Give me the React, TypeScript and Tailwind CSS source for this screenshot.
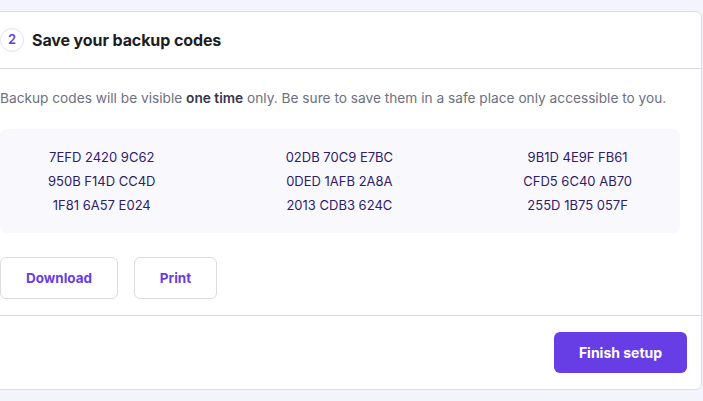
const codes = [
  ['7EFD 2420 9C62', '950B F14D CC4D', '1F81 6A57 E024'],
  ['02DB 70C9 E7BC', '0DED 1AFB 2A8A', '2013 CDB3 624C'],
  ['9B1D 4E9F FB61', 'CFD5 6C40 AB70', '255D 1B75 057F'],
];

export default function App() {
  return (
    <div
      className="min-h-[401px] w-[703px] overflow-hidden bg-[#f4f4fd] pt-[11px]"
      style={{ fontFamily: 'Inter, "Noto Sans", sans-serif' }}
    >
      {/* Card, left edge sits off screen */}
      <div className="ml-[-25px] w-[727px] rounded-r-md border border-[#dadce0] bg-white">
        {/* Header */}
        <div className="flex h-[57px] items-center gap-2 border-b border-[#dadce0] pl-[24px]">
          <span className="flex h-6 w-6 items-center justify-center rounded-full border border-[#e5e0fb] text-[13px] font-semibold text-[#673de6]">
            2
          </span>
          <h2 className="text-[16px] font-bold tracking-[-0.1px] text-[#1d1e20]">
            Save your backup codes
          </h2>
        </div>

        {/* Body */}
        <div className="border-b border-[#dadce0] pb-4 pl-[24px] pr-[21px] pt-[19px]">
          <p className="text-[13.7px] leading-5 text-[#6d7081]">
            Backup codes will be visible{' '}
            <span className="font-semibold text-[#36344d]">one time</span> only. Be sure to save
            them in a safe place only accessible to you.
          </p>

          <div className="mt-[21px] flex justify-between rounded-lg bg-[#f8f8fd] px-12 py-4">
            {codes.map((col, i) => (
              <div key={i} className="text-center text-[13px] leading-6 text-[#2f1c6a]">
                {col.map((c) => (
                  <div key={c}>{c}</div>
                ))}
              </div>
            ))}
          </div>

          <div className="mt-[24px] flex gap-4">
            <button className="h-[42px] w-[118px] rounded-md border border-[#dadce0] text-[13.5px] font-bold text-[#673de6]">
              Download
            </button>
            <button className="h-[42px] w-[83px] rounded-md border border-[#dadce0] text-[13.5px] font-bold text-[#673de6]">
              Print
            </button>
          </div>
        </div>

        {/* Footer */}
        <div className="flex justify-end py-4 pr-[14px]">
          <button className="h-[41px] w-[133px] rounded-md bg-[#673de6] text-[14px] font-bold text-white">
            Finish setup
          </button>
        </div>
      </div>
    </div>
  );
}
